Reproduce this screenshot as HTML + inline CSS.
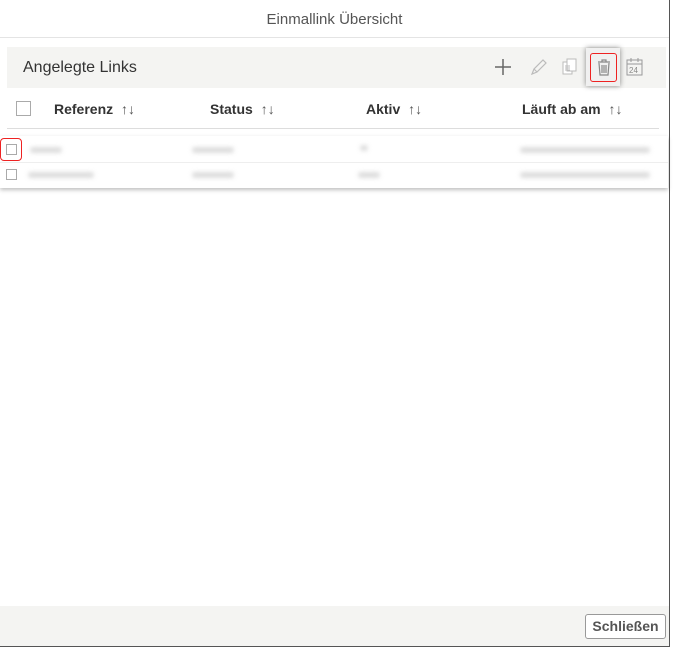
<!DOCTYPE html>
<html><head><style>
*{box-sizing:border-box;margin:0;padding:0}
body{width:673px;height:649px;background:#fff;font-family:"Liberation Sans",sans-serif;position:relative;overflow:hidden;color:#333}
.dlg{position:absolute;left:0;top:0;width:670px;height:647px;border-right:1px solid #555;border-bottom:1px solid #555;background:#fff}
.title{position:absolute;top:0;left:0;width:669px;height:38px;border-bottom:1px solid #e4e4e4;text-align:center;line-height:40px;font-size:15px;color:#555}
.bar{position:absolute;left:7px;top:47px;width:659px;height:41px;background:#f4f4f2}
.bar span{position:absolute;left:16px;top:12px;font-size:16px;color:#333}
.hd{position:absolute;top:101px;font-size:14px;font-weight:bold;color:#333}
.hd i{font-style:normal;font-weight:normal;color:#555;margin-left:4px}
.cb{position:absolute;width:14px;height:14px;border:1px solid #aaa;background:#fff}
.rows{position:absolute;left:0;top:136px;width:668px;height:52px;box-shadow:0 2px 4px rgba(0,0,0,.25);background:#fff}
.blur{position:absolute;height:6px;background:#ddd;filter:blur(2px);border-radius:3px}
.foot{position:absolute;left:0;top:606px;width:669px;height:40px;background:#f4f4f2}
.btn{position:absolute;right:3px;top:8px;width:81px;height:25px;border:1px solid #999;border-radius:3px;background:#fff;font-size:14px;color:#555;text-align:center;line-height:23px;font-weight:bold}
</style></head><body>
<div class="dlg">
<div class="title">Einmallink Übersicht</div>
<div class="bar"><span>Angelegte Links</span>
<svg style="position:absolute;left:485px;top:9px" width="22" height="22"><path d="M11 3v16M3 11h16" stroke="#666" stroke-width="1.5"/></svg>
<svg style="position:absolute;left:520px;top:9px" width="22" height="22"><path d="M5 18l2-5 9-9 3 3-9 9z M7 13l3 3" stroke="#bbb" fill="none" stroke-width="1.2"/></svg>
<svg style="position:absolute;left:552px;top:9px" width="22" height="22"><rect x="4" y="6" width="9" height="12" stroke="#bbb" fill="#fff"/><rect x="8" y="3" width="9" height="12" stroke="#bbb" fill="#fff"/><path d="M6 10h5M6 12h5M6 14h5" stroke="#bbb"/></svg>
<div style="position:absolute;left:579px;top:1px;width:34px;height:38px;background:#f0f0f0;box-shadow:0 0 5px rgba(0,0,0,.45)"></div>
<div style="position:absolute;left:583px;top:6px;width:27px;height:29px;border:1.5px solid #e22;border-radius:3px"></div>
<svg style="position:absolute;left:587px;top:11px" width="20" height="20"><path d="M4 4h12M8 4V2h4v2M5 5l1 12h8l1-12M8 7v8M10 7v8M12 7v8" stroke="#888" fill="none" stroke-width="1.2"/></svg>
<svg style="position:absolute;left:618px;top:9px" width="20" height="22"><rect x="2" y="4" width="15" height="15" stroke="#999" fill="none"/><path d="M2 8h15M6 2v4M13 2v4" stroke="#999"/><text x="4" y="17" font-size="8" fill="#888" font-family="Liberation Sans">24</text></svg>
</div>
<div class="cb" style="left:16px;top:101px;width:15px;height:15px"></div>
<div class="hd" style="left:54px">Referenz <i>↑↓</i></div>
<div class="hd" style="left:210px">Status <i>↑↓</i></div>
<div class="hd" style="left:366px">Aktiv <i>↑↓</i></div>
<div class="hd" style="left:522px">Läuft ab am <i>↑↓</i></div>
<div style="position:absolute;left:7px;top:128px;width:652px;height:1px;background:#ddd"></div>
<div class="rows">
<div style="position:absolute;left:0;top:26px;width:668px;height:1px;background:#eee"></div>
<div class="cb" style="left:6px;top:8px;width:11px;height:11px"></div>
<div style="position:absolute;left:0;top:2px;width:22px;height:23px;border:1.5px solid #e22;border-radius:4px"></div>
<div class="cb" style="left:6px;top:33px;width:11px;height:11px"></div>
<div class="blur" style="left:30px;top:11px;width:32px"></div>
<div class="blur" style="left:28px;top:36px;width:66px"></div>
<div class="blur" style="left:192px;top:11px;width:42px"></div>
<div class="blur" style="left:192px;top:36px;width:42px"></div>
<div class="blur" style="left:360px;top:9px;width:8px"></div>
<div class="blur" style="left:358px;top:36px;width:22px"></div>
<div class="blur" style="left:520px;top:11px;width:130px"></div>
<div class="blur" style="left:520px;top:36px;width:130px"></div>
</div>
<div class="foot"><div class="btn">Schließen</div></div>
</div>
</body></html>
